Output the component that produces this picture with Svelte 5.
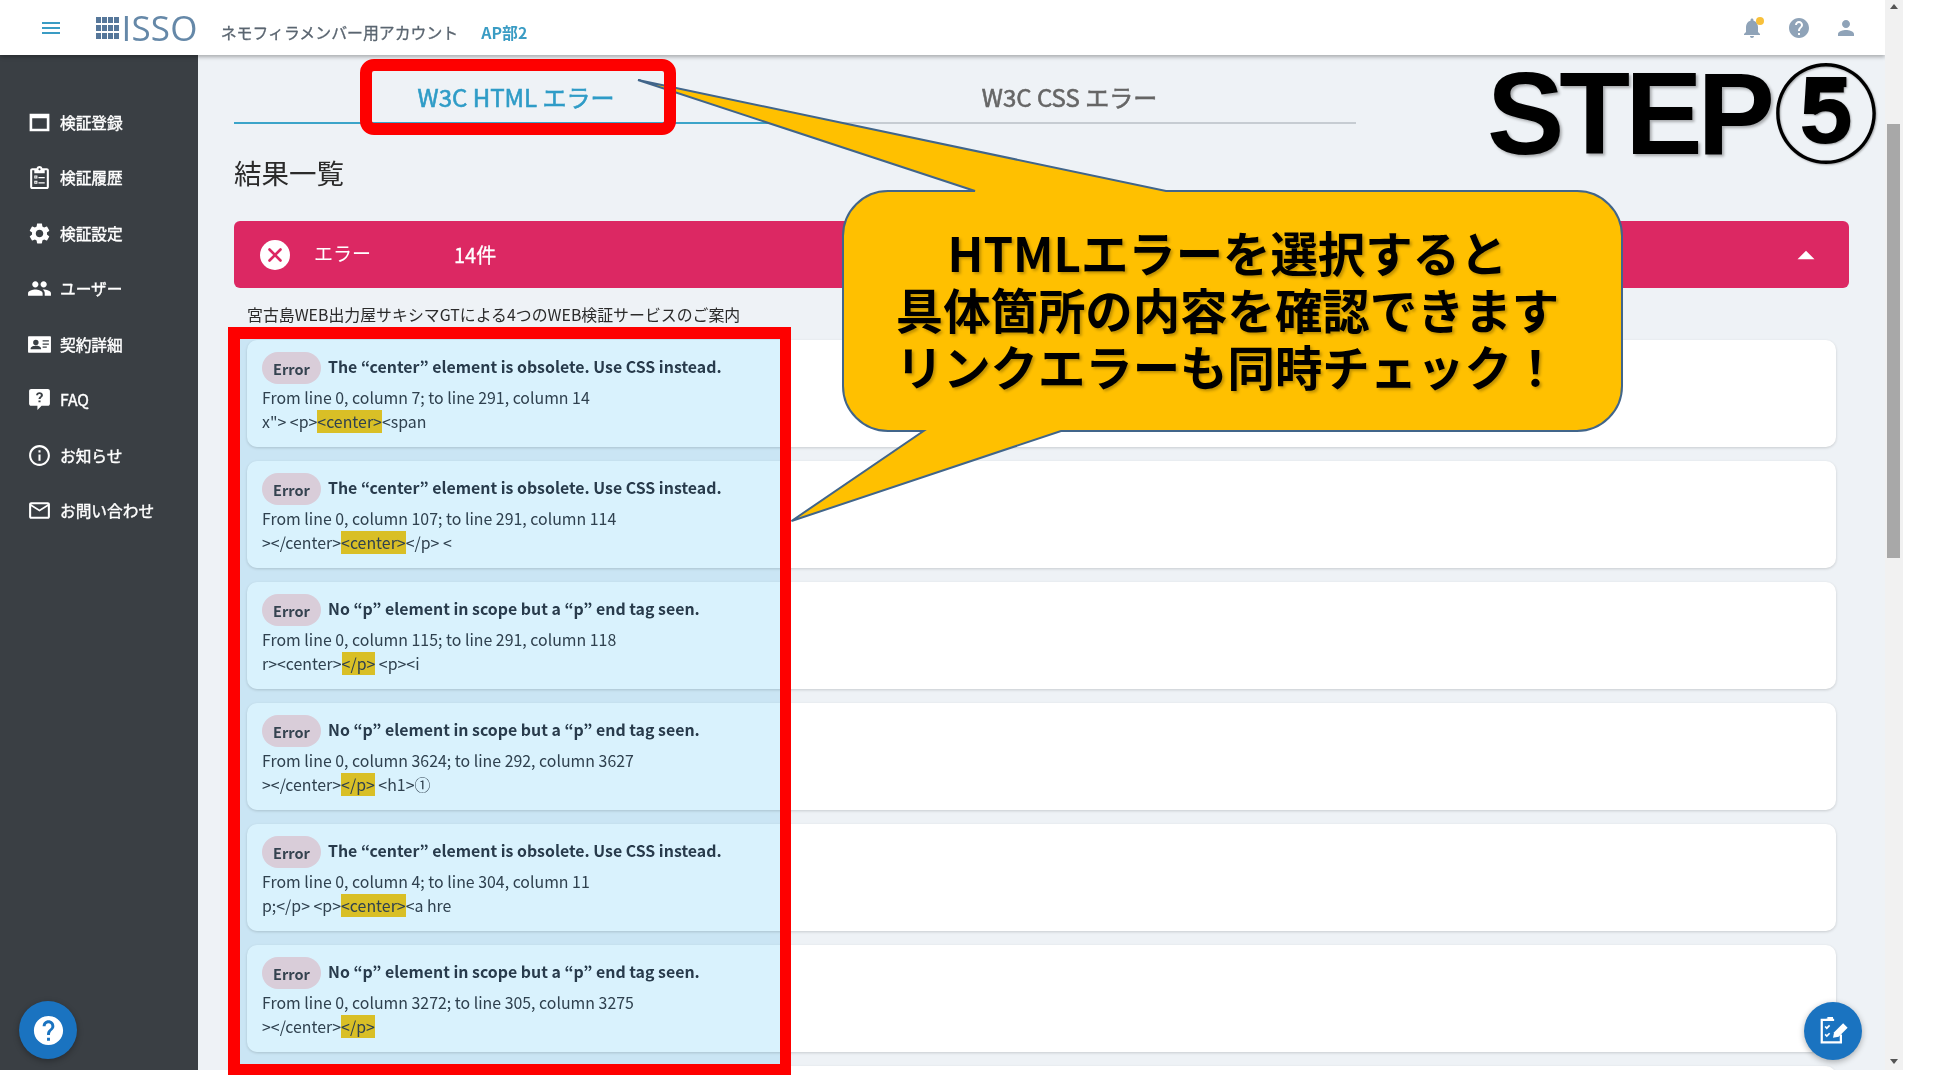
<script>
  const nav = [
    { label: '検証登録', icon: 'box' },
    { label: '検証履歴', icon: 'clip' },
    { label: '検証設定', icon: 'gear' },
    { label: 'ユーザー', icon: 'people' },
    { label: '契約詳細', icon: 'card' },
    { label: 'FAQ', icon: 'faq' },
    { label: 'お知らせ', icon: 'info' },
    { label: 'お問い合わせ', icon: 'mail' }
  ];
  const paths = {
    box: 'M2.500 3.500h19v17h-19zM5 8v10h14V8z',
    clip: 'M19 3h-4.2C14.4 1.8 13.3 1 12 1s-2.4.8-2.8 2H5c-1.1 0-2 .9-2 2v16c0 1.1.9 2 2 2h14c1.1 0 2-.9 2-2V5c0-1.1-.9-2-2-2zm-7 0c.6 0 1 .4 1 1s-.4 1-1 1-1-.4-1-1 .4-1 1-1zm7 18H5V5h2v3h10V5h2v16zM7 10h3v3H7zm1 1v1h1v-1zm3 .5h6v1.2h-6zM7 15h3v3H7zm1 1v1h1v-1zm3 .5h6v1.2h-6z',
    gear: 'M19.14 12.94c.04-.3.06-.61.06-.94 0-.32-.02-.64-.07-.94l2.03-1.58c.18-.14.23-.41.12-.61l-1.92-3.32c-.12-.22-.37-.29-.59-.22l-2.39.96c-.5-.38-1.03-.7-1.62-.94l-.36-2.54c-.04-.24-.24-.41-.48-.41h-3.84c-.24 0-.43.17-.47.41l-.36 2.54c-.59.24-1.13.57-1.62.94l-2.39-.96c-.22-.08-.47 0-.59.22L2.74 8.87c-.12.21-.08.47.12.61l2.03 1.58c-.05.3-.09.63-.09.94s.02.64.07.94l-2.03 1.58c-.18.14-.23.41-.12.61l1.92 3.32c.12.22.37.29.59.22l2.39-.96c.5.38 1.03.7 1.62.94l.36 2.54c.05.24.24.41.48.41h3.84c.24 0 .44-.17.47-.41l.36-2.54c.59-.24 1.13-.56 1.62-.94l2.39.96c.22.08.47 0 .59-.22l1.92-3.32c.12-.22.07-.47-.12-.61l-2.01-1.58zM12 15.6c-1.98 0-3.6-1.62-3.6-3.6s1.62-3.6 3.6-3.6 3.6 1.62 3.6 3.6-1.62 3.6-3.6 3.6z',
    people: 'M16 11c1.66 0 2.99-1.34 2.99-3S17.66 5 16 5c-1.66 0-3 1.34-3 3s1.34 3 3 3zm-8 0c1.66 0 2.99-1.34 2.99-3S9.66 5 8 5C6.34 5 5 6.34 5 8s1.34 3 3 3zm0 2c-2.33 0-7 1.17-7 3.5V19h14v-2.5c0-2.33-4.67-3.5-7-3.5zm8 0c-.29 0-.62.02-.97.05 1.16.84 1.97 1.97 1.97 3.45V19h6v-2.5c0-2.33-4.67-3.5-7-3.5z',
    card: 'M2 4h20c.6 0 1 .4 1 1v14c0 .6-.4 1-1 1H2c-.6 0-1-.4-1-1V5c0-.6.4-1 1-1zm6.500 3.500a2.600 2.600 0 1 0 0 5.200 2.600 2.600 0 0 0 0-5.200zM3.500 16.500h10v-1c0-1.600-3.300-2.400-5-2.400s-5 .8-5 2.400zM15 8v1.200h6V8zm0 3v1.200h6V11zm0 3v1.200h4V14z',
    faq: 'M4 2h16c1.100 0 2 .9 2 2v12c0 1.100-.9 2-2 2h-6l-4 4v-4H4c-1.100 0-2-.9-2-2V4c0-1.100.9-2 2-2zm7 11v1.600h2V13zm1-8c-1.900 0-3.200 1.200-3.300 3h1.900c0-.8.6-1.300 1.400-1.300s1.300.5 1.300 1.200c0 1.400-2.300 1.500-2.300 3.600h2c0-1.500 2.300-1.700 2.300-3.700C15.300 6.100 13.900 5 12 5z',
    info: 'M11 7h2v2h-2zm0 4h2v6h-2zm1-9C6.48 2 2 6.48 2 12s4.48 10 10 10 10-4.48 10-10S17.52 2 12 2zm0 18c-4.41 0-8-3.59-8-8s3.59-8 8-8 8 3.59 8 8-3.59 8-8 8z',
    mail: 'M20 4H4c-1.1 0-1.99.9-1.99 2L2 18c0 1.1.9 2 2 2h16c1.1 0 2-.9 2-2V6c0-1.1-.9-2-2-2zm0 14H4V8l8 5 8-5v10zm-8-7L4 6h16l-8 5z'
  };
  const help = 'M12 2C6.48 2 2 6.48 2 12s4.48 10 10 10 10-4.48 10-10S17.52 2 12 2zm1 17h-2v-2h2v2zm2.07-7.75l-.9.92C13.45 12.9 13 13.5 13 15h-2v-.5c0-1.1.45-2.1 1.17-2.83l1.24-1.26c.37-.36.59-.86.59-1.41 0-1.1-.9-2-2-2s-2 .9-2 2H8c0-2.21 1.79-4 4-4s4 1.79 4 4c0 .88-.36 1.68-.93 2.25z';
  const CENTER = 'The “center” element is obsolete. Use CSS instead.';
  const NOP = 'No “p” element in scope but a “p” end tag seen.';
  const errors = [
    { t: CENTER, at: 'From line 0, column 7; to line 291, column 14', a: 'x"> <p>', h: '<center>', b: '<span' },
    { t: CENTER, at: 'From line 0, column 107; to line 291, column 114', a: '></center>', h: '<center>', b: '</p> <' },
    { t: NOP, at: 'From line 0, column 115; to line 291, column 118', a: 'r><center>', h: '</p>', b: ' <p><i' },
    { t: NOP, at: 'From line 0, column 3624; to line 292, column 3627', a: '></center>', h: '</p>', b: ' <h1>①' },
    { t: CENTER, at: 'From line 0, column 4; to line 304, column 11', a: 'p;</p> <p>', h: '<center>', b: '<a hre' },
    { t: NOP, at: 'From line 0, column 3272; to line 305, column 3275', a: '></center>', h: '</p>', b: '' }
  ];
</script>

<div class="root">
  <div class="shell">
    <header class="top">
      <svg class="burger" viewBox="0 0 24 24"><path d="M3 18h18v-2H3v2zm0-5h18v-2H3v2zm0-7v2h18V6H3z" /></svg>
      <div class="logo">
        <div class="dots">{#each Array(12) as _}<i></i>{/each}</div>
        <span class="isso">ISSO</span>
      </div>
      <span class="acct">ネモフィラメンバー用アカウント</span>
      <span class="dept">AP部2</span>
      <div class="tools">
        <span class="bell">
          <svg viewBox="0 0 24 24"><path d="M12 22c1.1 0 2-.9 2-2h-4c0 1.1.89 2 2 2zm6-6v-5c0-3.07-1.64-5.64-4.5-6.32V4c0-.83-.67-1.5-1.5-1.5s-1.5.67-1.500 1.500v.68C7.630 5.360 6 7.920 6 11v5l-2 2v1h16v-1l-2-2z" /></svg>
          <b></b>
        </span>
        <svg viewBox="0 0 24 24"><path d={help} /></svg>
        <svg viewBox="0 0 24 24"><path d="M12 12c2.210 0 4-1.790 4-4s-1.790-4-4-4-4 1.790-4 4 1.790 4 4 4zm0 2c-2.670 0-8 1.340-8 4v2h16v-2c0-2.660-5.330-4-8-4z" /></svg>
      </div>
    </header>
    <div class="body">
      <aside class="side">
        <nav>
          {#each nav as n}
            <div class="item">
              <svg viewBox="0 0 24 24"><path d={paths[n.icon]} fill-rule="evenodd" /></svg>
              <span>{n.label}</span>
            </div>
          {/each}
        </nav>
        <div class="fab help"><svg viewBox="0 0 24 24"><path d={help} /></svg></div>
      </aside>
      <main class="main">
        <div class="tabs">
          <div class="tab on">W3C HTML エラー</div>
          <div class="tab off">W3C CSS エラー</div>
        </div>
        <h2>結果一覧</h2>
        <div class="banner">
          <svg class="x" viewBox="0 0 30 30"><circle cx="15" cy="15" r="15" fill="#fff" /><path d="M9.500 9.500l11 11m0-11l-11 11" stroke="#dc2863" stroke-width="2.600" stroke-linecap="round" /></svg>
          <span class="lbl">エラー</span>
          <span class="cnt">14件</span>
          <svg class="chev" viewBox="0 0 24 24"><path d="M6 15l6-6 6 6z" /></svg>
        </div>
        <p class="note">宮古島WEB出力屋サキシマGTによる4つのWEB検証サービスのご案内</p>
        <div class="list">
          {#each errors as e}
            <article class="card">
              <div class="head"><span class="pill">Error</span><strong>{e.t}</strong></div>
              <div class="ln">{e.at}</div>
              <div class="ln">{e.a}<mark>{e.h}</mark>{e.b}</div>
            </article>
          {/each}
          <article class="card"></article>
        </div>
        <div class="fab edit">
          <svg viewBox="0 0 32 32" fill="none" stroke="#fff"><path d="M13 6H6v20h17v-7" stroke-width="2" /><path d="M10 6h7M11 4.500h5" stroke-width="2" /><path d="M9 12l1.500 1.500L13 11M9 19l1.500 1.500L13 18" stroke-width="1.500" /><path d="M16 22l1-5 8-8 4 4-8 8z" fill="#fff" stroke="none" /></svg>
        </div>
      </main>
      <div class="bar"><span class="up"></span><span class="thumb"></span><span class="down"></span></div>
    </div>
  </div>

  <div class="tint"></div>
  <svg class="bubble" viewBox="0 0 1950 1077">
    <path d="M638 80L975 191H888a45 45 0 0 0-45 45V386a45 45 0 0 0 45 45H923.500L791.500 521L1061 431H1577a45 45 0 0 0 45-45V236a45 45 0 0 0-45-45H1166Z" fill="#ffc000" stroke="#41658a" stroke-width="2" />
  </svg>
  <div class="say">HTMLエラーを選択すると<br />具体箇所の内容を確認できます<br />リンクエラーも同時チェック！</div>
  <div class="step">STEP</div>
  <div class="ring">⑤</div>
  <div class="red a"></div>
  <div class="red b"></div>
</div>

<style>
  :global(body) { margin: 0; background: #fff; }
  .root { position: relative; width: 1950px; height: 1077px; overflow: hidden; font-family: "Noto Sans CJK JP", "Noto Sans", sans-serif; color: #2f3a44; background: #fff; }
  .shell { width: 1903px; height: 1070px; display: flex; flex-direction: column; overflow: hidden; }
  .top { height: 55px; flex: none; display: flex; align-items: center; background: #fff; box-shadow: 0 2px 4px rgba(0,0,0,.3); position: relative; z-index: 2; padding-left: 39px; width: 1846px; }
  .burger { width: 24px; height: 24px; fill: #3a9cc4; }
  .logo { display: flex; align-items: center; margin-left: 33px; }
  .dots { display: grid; grid-template-columns: repeat(4, 4.500px); grid-auto-rows: 6px; gap: 2px 1.500px; padding-top: 1px; }
  .dots i { background: #56779a; }
  .isso { font: 500 35px/40px "Open Sans", sans-serif; color: #6588a8; margin-left: 3px; letter-spacing: .2px; }
  .acct { font-size: 15.900px; color: #5a6570; margin-left: 23px; padding-top: 9px; -webkit-text-stroke: .3px currentColor; }
  .dept { font-size: 15.900px; font-weight: 700; color: #3a9cc4; margin-left: 23px; padding-top: 9px; }
  .tools { margin-left: auto; display: flex; gap: 23px; align-items: center; padding-right: 27px; }
  .tools svg { width: 24px; height: 24px; fill: #8fa3b8; display: block; }
  .tools .bell { position: relative; display: block; }
  .bell b { position: absolute; right: 0; top: 1px; width: 8px; height: 8px; border-radius: 50%; background: #f8c03a; }

  .body { flex: 1; display: flex; min-height: 0; }
  .side { width: 198px; flex: none; background: #3a3f44; position: relative; padding-top: 39.500px; box-sizing: border-box; }
  .item { height: 55.500px; display: flex; align-items: center; padding-left: 27px; color: #fff; font-size: 15.700px; gap: 8px; -webkit-text-stroke: .4px currentColor; }
  .item svg { width: 25px; height: 25px; fill: #fff; flex: none; }
  .fab { position: absolute; border-radius: 50%; background: #1a73c0; box-shadow: 0 2px 6px rgba(0,0,0,.3); display: flex; align-items: center; justify-content: center; }
  .help { left: 19px; bottom: 11px; width: 58px; height: 58px; }
  .help svg { width: 35px; height: 35px; fill: #fff; }
  .main { flex: 1; min-width: 0; background: #eef2f6; padding: 0 36px; overflow: hidden; position: relative; }
  .tabs { display: flex; width: 1122px; height: 69px; }
  .tab { width: 50%; display: flex; align-items: center; justify-content: center; font-size: 24px; color: #666; border-bottom: 2px solid #c6ccd2; box-sizing: border-box; padding-top: 15px; -webkit-text-stroke: .6px currentColor; }
  .tab.on { color: #2f9cc7; border-bottom: 2px solid #3ba4c9; padding-left: 3px; }
  .tab.off { padding-right: 12px; }
  h2 { margin: 26px 0 0; font-size: 27.500px; font-weight: 400; line-height: 44px; color: #2b2b2b; height: 44px; }
  .banner { margin-top: 27px; height: 67px; background: #dc2863; border-radius: 6px; display: flex; align-items: center; color: #fff; position: relative; padding-left: 26px; }
  .x { width: 30px; height: 30px; }
  .lbl { font-size: 19px; margin-left: 24px; margin-top: -4px; }
  .cnt { font-size: 20px; margin-left: 83px; -webkit-text-stroke: .3px currentColor; }
  .chev { width: 34px; height: 34px; fill: #fff; margin-left: auto; margin-right: 26px; }
  .note { margin: 15px 0 0 13px; font-size: 15.900px; line-height: 24px; color: #2b2b2b; }
  .list { margin: 13px 13px 0 13px; display: flex; flex-direction: column; gap: 14px; }
  .card { height: 107px; flex: none; box-sizing: border-box; background: #fff; border-radius: 10px; box-shadow: 0 1px 3px rgba(0,0,0,.16); padding: 12px 15px; }
  .head { display: flex; gap: 7px; height: 34px; }
  .pill { width: 59px; height: 32px; border-radius: 16px; background: #ffd8db; display: flex; align-items: center; justify-content: center; font-size: 14.500px; font-weight: 700; color: #3e4650; padding-top: 1px; box-sizing: border-box; }
  .head strong { font-size: 15.900px; line-height: 30px; font-weight: 700; color: #2f3e4c; }
  .ln { font-size: 15.900px; line-height: 24px; color: #37444f; white-space: pre; }
  mark { background: #ffca26; color: inherit; }
  .edit { right: 23px; top: 947px; width: 58px; height: 58px; }
  .edit svg { width: 36px; height: 36px; }
  .bar { width: 18px; flex: none; background: #f1f1f1; position: relative; margin-top: -55px; z-index: 3; }
  .thumb { position: absolute; left: 2px; right: 3px; top: 124px; height: 434px; background: #a8a8a8; }
  .up, .down { position: absolute; left: 5px; border: 4px solid transparent; }
  .up { top: 4px; border-bottom: 5px solid #555; border-top: 0; }
  .down { bottom: 6px; border-top: 5px solid #555; border-bottom: 0; }

  .tint { position: absolute; left: 240px; top: 339px; width: 540px; height: 725px; background: #d9f2fd; mix-blend-mode: multiply; }
  .bubble { position: absolute; inset: 0; width: 1950px; height: 1077px; pointer-events: none; }
  .say { position: absolute; left: 843px; top: 223px; width: 769px; text-align: center; font-size: 47.400px; line-height: 57px; font-weight: 700; color: #000; text-shadow: 2px 2px 3px rgba(0,0,0,.25); white-space: nowrap; }
  .step { position: absolute; left: 1487px; top: 49px; font: 700 116px/130px "Liberation Sans", sans-serif; letter-spacing: -5px; color: #000; text-shadow: 2px 2px 3px rgba(0,0,0,.3); white-space: nowrap; }
  .ring { position: absolute; left: 1768px; top: 43px; width: 116px; height: 130px; text-align: center; font: 400 107px/130px "Noto Sans CJK JP", sans-serif; color: #000; text-shadow: 1px 1px 2px rgba(0,0,0,.3); }
  .ring::after { content: "5"; position: absolute; left: 0; right: 0; top: 0; text-align: center; font: 700 97px/134px "Liberation Sans", sans-serif; color: #000; }
  .red { position: absolute; border: 12px solid #fe0000; box-sizing: border-box; }
  .red.a { left: 360px; top: 59px; width: 316px; height: 76px; border-radius: 14px; }
  .red.b { left: 228px; top: 327px; width: 563px; height: 748px; border-width: 12px 11px 11px 12px; }
</style>
